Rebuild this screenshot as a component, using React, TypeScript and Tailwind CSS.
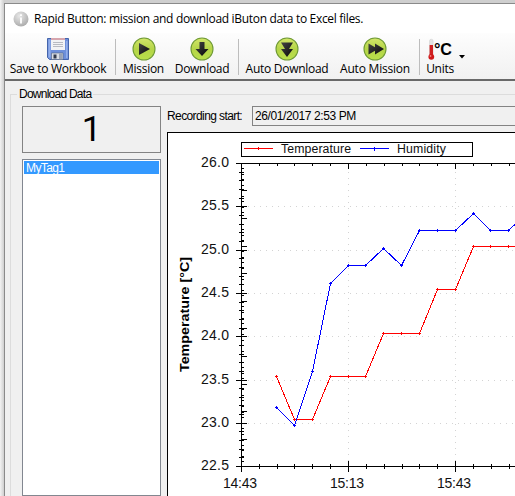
import type { ReactNode } from "react"

type Point = [number, number]

const temperature: Point[] = [
  [276.5, 376.5], [294.5, 419.5], [312.5, 419.5], [330.5, 376.5], [348.5, 376.5],
  [365.5, 376.5], [383.5, 333.5], [401.5, 333.5], [419.5, 333.5], [437.5, 289.5],
  [455.5, 289.5], [473.5, 246.5], [490.5, 246.5], [508.5, 246.5], [526.5, 246.5],
]

const humidity: Point[] = [
  [276.5, 407.5], [294.5, 425.5], [312.5, 371.5], [330.5, 283.5], [348.5, 265.5],
  [365.5, 265.5], [383.5, 248.5], [401.5, 265.5], [419.5, 230.5], [437.5, 230.5],
  [455.5, 230.5], [473.5, 213.5], [490.5, 230.5], [508.5, 230.5], [526.5, 213.5],
]

const yTicks = [
  { label: "26.0", y: 163 },
  { label: "25.5", y: 206 },
  { label: "25.0", y: 250 },
  { label: "24.5", y: 293 },
  { label: "24.0", y: 336 },
  { label: "23.5", y: 380 },
  { label: "23.0", y: 423 },
  { label: "22.5", y: 466 },
]

const xTicks = [
  { label: "14:43", x: 241 },
  { label: "15:13", x: 348 },
  { label: "15:43", x: 455 },
]

const xMinor = [259, 277, 294, 312, 330, 366, 384, 402, 419, 437, 473, 491, 509]
const yMinor = Array.from({ length: 35 }, (_, i) => Math.round(163 + i * 8.66))
const humidityMajor = [190, 218, 246, 273, 301, 328, 356, 384, 411, 439]
const humidityMinor = Array.from({ length: 54 }, (_, i) => Math.round(168.2 + i * 5.53))

function Series({ points, color }: { points: Point[]; color: string }) {
  return (
    <g stroke={color} fill="none" shapeRendering="crispEdges">
      <polyline points={points.map((p) => p.join(",")).join(" ")} />
      {points.map(([x, y]) => (
        <path key={x} d={`M${x - 1.5} ${y}h3M${x} ${y - 1.5}v3`} />
      ))}
    </g>
  )
}

function Chart() {
  return (
    <svg
      viewBox="168 133 347 363"
      width="347"
      height="363"
      className="block font-['Liberation_Sans',Arial,sans-serif]"
    >
      <g stroke="#d3d3d3" strokeDasharray="1 5" shapeRendering="crispEdges">
        {yTicks.slice(1, 7).map((t) => (
          <path key={t.label} d={`M248 ${t.y + 0.5}H515`} />
        ))}
        {xTicks.slice(1).map((t) => (
          <path key={t.label} d={`M${t.x + 0.5} 172V462`} />
        ))}
      </g>

      <g stroke="#000" fill="none" shapeRendering="crispEdges">
        <path d="M241.5 163V472M236 163.5H515M236 466.5H515" />
        {yTicks.map((t) => (
          <path key={t.label} d={`M236 ${t.y + 0.5}h${t.y === 163 ? 6 : 11}`} />
        ))}
        {yMinor.map((y) => (
          <path key={y} d={`M239 ${y + 0.5}h5`} />
        ))}
        {humidityMajor.map((y) => (
          <path key={y} d={`M241 ${y + 0.5}h6`} />
        ))}
        {humidityMinor.map((y) => (
          <path key={y} d={`M241 ${y + 0.5}h3`} />
        ))}
        {xTicks.slice(1).map((t) => (
          <path key={t.label} d={`M${t.x + 0.5} 163v6M${t.x + 0.5} 461v11`} />
        ))}
        {xMinor.map((x) => (
          <path key={x} d={`M${x + 0.5} 163v3M${x + 0.5} 464v5`} />
        ))}
        <rect x="241.5" y="142.5" width="231" height="14" />
      </g>

      <Series points={temperature} color="#f00" />
      <Series points={humidity} color="#00f" />

      <path d="M244 148.5h29M258.5 147v3" stroke="#f00" shapeRendering="crispEdges" />
      <path d="M360 148.5h29M374.5 147v4" stroke="#00f" shapeRendering="crispEdges" />

      <g fontSize="12.3" fill="#111">
        <text x="281" y="153" textLength="70">Temperature</text>
        <text x="397" y="153" textLength="49">Humidity</text>
      </g>
      <g fontSize="14" fill="#111">
        {yTicks.map((t) => (
          <text key={t.label} x="201" y={t.y + 4} textLength="28">{t.label}</text>
        ))}
        {xTicks.map((t) => (
          <text key={t.label} x={t.x - 18} y="488" textLength="34">{t.label}</text>
        ))}
      </g>
      <text
        transform="translate(189 372) rotate(-90)"
        fontSize="13"
        fontWeight="700"
        textLength="115"
        lengthAdjust="spacingAndGlyphs"
      >
        Temperature [°C]
      </text>
    </svg>
  )
}

function RoundIcon({ children }: { children: ReactNode }) {
  return (
    <svg width="24" height="24" viewBox="0 0 24 24">
      <defs>
        <linearGradient id="lime" x1="0" y1="0" x2="0" y2="1">
          <stop offset="0" stopColor="#d3e66a" />
          <stop offset="0.5" stopColor="#b5d548" />
          <stop offset="1" stopColor="#b9e04a" />
        </linearGradient>
        <linearGradient id="ink" x1="0" y1="0" x2="1" y2="1">
          <stop offset="0" stopColor="#444" />
          <stop offset="1" stopColor="#080808" />
        </linearGradient>
      </defs>
      <circle cx="12" cy="12" r="11" fill="url(#lime)" stroke="#6f9a35" strokeWidth="1.1" />
      <g fill="url(#ink)">{children}</g>
    </svg>
  )
}

function FloppyIcon() {
  return (
    <svg width="24" height="24" viewBox="0 0 24 24">
      <path d="M1.5 1.5h21v21H3.5l-2-2z" fill="#6d8fda" stroke="#4464ab" />
      <path d="M2.5 2.5h2v18h-2zM20 4h1.5v17H20z" fill="#92aeea" />
      <path d="M5 1h14v12H5z" fill="#f2f3f5" />
      <path d="M5 1h14v2H5z" fill="#d6a6ae" />
      <path d="M7 5.5h10M7 7.5h10M7 9.5h10" stroke="#b8bbc2" />
      <path d="M5.5 16H17v6.5H5.5z" fill="#d9dde3" stroke="#53617f" strokeWidth=".6" />
      <path d="M7.5 17.5h3v4h-3z" fill="#333b4c" />
      <path d="M13 16.3h3.5v6H13z" fill="#99a3b5" />
    </svg>
  )
}

function UnitsIcon() {
  return (
    <svg width="24" height="24" viewBox="0 0 24 24" overflow="visible">
      <path d="M1.5 4a1.8 1.8 0 0 1 3.6 0v14H1.5z" fill="#e3e3e3" stroke="#ccc" strokeWidth=".5" />
      <path d="M1.6 8H5v11H1.6z" fill="#cf2020" />
      <circle cx="3.3" cy="19.8" r="2.9" fill="#d01818" />
      <circle cx="2.5" cy="19" r="0.9" fill="#f08080" />
      <text
        x="6"
        y="18"
        fontSize="16"
        fontWeight="700"
        textLength="17.5"
        lengthAdjust="spacingAndGlyphs"
        fontFamily="Liberation Sans, Arial, sans-serif"
      >
        °C
      </text>
    </svg>
  )
}

type ToolProps = { icon: ReactNode; label: string; className: string }

function Tool({ icon, label, className }: ToolProps) {
  return (
    <button type="button" className={"flex shrink-0 flex-col items-center whitespace-nowrap " + className}>
      {icon}
      <span className="text-[12px] leading-4">{label}</span>
    </button>
  )
}

function Separator() {
  return <div className="mt-[2px] h-9 w-px shrink-0 bg-[#bdbdbd]" />
}

export default function App() {
  return (
    <div className="flex h-[496px] w-[515px] overflow-hidden bg-[linear-gradient(to_right,#f3f3f3,#cfcfcf_4px)] pt-[3px] pl-1 text-black">
      <div className="flex w-[511px] shrink-0 flex-col border-t border-l border-[#8a8a8a] bg-[#f0f0f0]">
        <header className="flex h-[29px] shrink-0 items-center bg-white pl-2 font-['Open_Sans','Noto_Sans',sans-serif] text-[12px]">
          <svg width="16" height="16" viewBox="0 0 16 16">
            <defs>
              <radialGradient id="disc" cx="0.4" cy="0.3" r="0.75">
                <stop offset="0" stopColor="#e8e8e8" />
                <stop offset="1" stopColor="#a9a9a9" />
              </radialGradient>
            </defs>
            <circle cx="8" cy="8" r="7.5" fill="url(#disc)" />
            <path d="M8 3.3V5M8 6.5v6" stroke="#fff" strokeWidth="1.8" />
          </svg>
          <span className="ml-[5px] whitespace-nowrap tracking-[-0.32px]">
            Rapid Button: mission and download iButon data to Excel files.
          </span>
        </header>

        <nav className="flex h-12 shrink-0 items-start border-b-2 border-[#696969] bg-gradient-to-b from-[#fdfdfd] to-[#f1f1f1] pt-1 font-['Open_Sans','Noto_Sans',sans-serif]">
          <Tool icon={<FloppyIcon />} label="Save to Workbook" className="ml-[5px] w-[96px] tracking-[-0.3px]" />
          <div className="w-[9px] shrink-0" />
          <Separator />
          <Tool
            icon={<RoundIcon><path d="M7 6l11 6-11 6z" /></RoundIcon>}
            label="Mission"
            className="ml-[6px] w-[43px] tracking-[-0.3px]"
          />
          <Tool
            icon={<RoundIcon><path d="M9.5 5h5v7h4L12 19l-6.5-7h4z" /></RoundIcon>}
            label="Download"
            className="ml-[8px] w-[58px] tracking-[-0.3px]"
          />
          <div className="w-[7px] shrink-0" />
          <Separator />
          <Tool
            icon={<RoundIcon><path d="M6 5.5h12l-4 6.5h4l-6 8-6-8h4z" /></RoundIcon>}
            label="Auto Download"
            className="ml-[5px] w-[86px] tracking-[-0.28px]"
          />
          <Tool
            icon={<RoundIcon><path d="M5.5 6.5l6.5 3.7V6.5l9 5.5-9 5.5v-3.7l-6.5 3.7z" /></RoundIcon>}
            label="Auto Mission"
            className="ml-[7px] w-[76px] tracking-[-0.22px]"
          />
          <div className="w-[6px] shrink-0" />
          <Separator />
          <Tool icon={<UnitsIcon />} label="Units" className="ml-[6px] w-[28px] tracking-[-0.3px]" />
          <svg width="6" height="4" viewBox="0 0 6 4" className="mt-[18px] ml-[5px]">
            <path d="M0 0h6L3 3.5z" />
          </svg>
        </nav>

        <fieldset className="mt-[6px] ml-[5px] flex h-[412px] w-[510px] shrink-0 border-t border-l border-[#dcdcdc] font-['Liberation_Sans',Arial,sans-serif] text-[12px]">
          <legend className="ml-[6px] h-[14px] px-[2px] leading-[14px] tracking-[-0.75px]">Download Data</legend>
          <div className="flex">
            <div className="ml-[11px] flex w-[139px] shrink-0 flex-col pt-[5px]">
              <div className="flex h-[47px] items-center justify-center border border-[#838383] font-['Roboto',sans-serif] text-[35px] leading-none">
                1
              </div>
              <div className="mt-[6px] h-[337px] border border-[#828790] bg-white p-px">
                <div className="h-[13px] bg-[#3399ff] pl-[2px] leading-[14px] tracking-[-0.6px] text-white">MyTag1</div>
              </div>
            </div>
            <div className="ml-[6px] flex w-[348px] shrink-0 flex-col pt-[5px]">
              <div className="flex h-5 items-center">
                <span className="w-[85px] shrink-0 whitespace-nowrap tracking-[-0.6px]">Recording start:</span>
                <div className="h-5 flex-1 border-y border-l border-[#838383] pl-[2px] leading-[18px] tracking-[-0.4px]">
                  26/01/2017 2:53 PM
                </div>
              </div>
              <div className="mt-[6px] h-[364px] border-t border-l border-black bg-white">
                <Chart />
              </div>
            </div>
          </div>
        </fieldset>
      </div>
    </div>
  )
}
